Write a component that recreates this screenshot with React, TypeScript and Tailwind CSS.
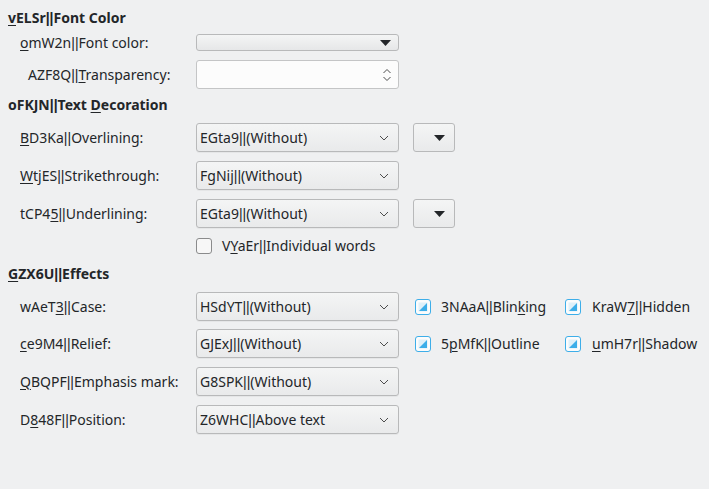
import React from "react";

const U = ({ c }: { c: string }) => <span className="underline underline-offset-[2px] decoration-[1px]">{c}</span>;
const P = () => <span style={{ fontFamily: '"Liberation Sans", Arial, sans-serif' }}>||</span>;

const Chevron = () => (
  <svg width="10" height="6" viewBox="0 0 10 6" className="shrink-0">
    <path d="M1 1 L5 5 L9 1" fill="none" stroke="#4d4d4d" strokeWidth="1" />
  </svg>
);

const Tri = () => (
  <svg width="11" height="6" viewBox="0 0 11 6" className="shrink-0">
    <path d="M0 0 L11 0 L5.5 6 Z" fill="#232629" />
  </svg>
);

const Combo = ({ children }: { children: React.ReactNode }) => (
  <div className="w-[203px] h-[29px] shrink-0 rounded-[3px] border border-[#b8b9ba] bg-gradient-to-b from-[#f4f5f5] to-[#e9eaeb] flex items-center pl-[3px] pr-[9px] justify-between shadow-[0_1px_0_rgba(0,0,0,0.04)]">
    <span className="whitespace-nowrap">{children}</span>
    <Chevron />
  </div>
);

const SmallBtn = () => (
  <div className="ml-[14px] w-[42px] h-[29px] rounded-[3px] border border-[#b8b9ba] bg-gradient-to-b from-[#f4f5f5] to-[#e9eaeb] flex items-center justify-end pr-[9px]">
    <Tri />
  </div>
);

const TriCheck = () => (
  <div className="w-[16px] h-[16px] shrink-0 rounded-[3px] border-[1.5px] border-[#3daee9] bg-[#fcfcfc] flex items-center justify-center">
    <svg width="10" height="10" viewBox="0 0 10 10">
      <rect x="0.5" y="0.5" width="9" height="9" fill="#3daee9" opacity="0.15" />
      <path d="M9 1 L9 9 L1 9 Z" fill="#3daee9" />
    </svg>
  </div>
);

const Row = ({ label, children, mt }: { label: React.ReactNode; children: React.ReactNode; mt: string }) => (
  <div className={`flex items-center h-[29px] ${mt}`}>
    <div className="w-[188px] pl-[12px] whitespace-nowrap shrink-0">{label}</div>
    {children}
  </div>
);

export default function App() {
  return (
    <div
      className="w-[709px] h-[489px] bg-[#eff0f1] text-[#232629] text-[14px] leading-[18px] pl-[8px] pt-[9px] overflow-hidden"
      style={{ fontFamily: '"Noto Sans", "DejaVu Sans", sans-serif' }}
    >
      <div className="font-bold h-[18px]"><U c="v" />ELSr<P />Font Color</div>

      <div className="flex items-center h-[17px] mt-[7px]">
        <div className="w-[188px] pl-[12px] whitespace-nowrap shrink-0"><U c="o" />mW2n<P />Font color:</div>
        <div className="w-[203px] h-[17px] rounded-[3px] border border-[#b8b9ba] bg-gradient-to-b from-[#f4f5f5] to-[#e6e7e8] flex items-center justify-end pr-[7px]">
          <Tri />
        </div>
      </div>

      <div className="flex items-center h-[29px] mt-[9px]">
        <div className="w-[188px] pl-[20px] whitespace-nowrap shrink-0">AZF8Q<P /><U c="T" />ransparency:</div>
        <div className="w-[203px] h-[29px] rounded-[3px] border border-[#c4c5c6] bg-[#fcfcfc] flex items-center justify-end pr-[6px]">
          <svg width="10" height="16" viewBox="0 0 10 16">
            <path d="M1.5 6 L5 2.5 L8.5 6" fill="none" stroke="#4d4d4d" strokeWidth="1" />
            <path d="M1.5 10 L5 13.5 L8.5 10" fill="none" stroke="#4d4d4d" strokeWidth="1" />
          </svg>
        </div>
      </div>

      <div className="font-bold h-[18px] mt-[7px]">oFKJN<P />Text <U c="D" />ecoration</div>

      <Row mt="mt-[9px]" label={<><U c="B" />D3Ka<P />Overlining:</>}>
        <Combo>EGta9<P />(Without)</Combo>
        <SmallBtn />
      </Row>
      <Row mt="mt-[9px]" label={<><U c="W" />tjES<P />Strikethrough:</>}>
        <Combo>FgNij<P />(Without)</Combo>
      </Row>
      <Row mt="mt-[9px]" label={<>tCP4<U c="5" /><P />Underlining:</>}>
        <Combo>EGta9<P />(Without)</Combo>
        <SmallBtn />
      </Row>

      <div className="flex items-center h-[16px] mt-[10px] pl-[188px]">
        <div className="w-[16px] h-[16px] rounded-[3px] border border-[#8a8b8c] bg-[#f7f7f7]" />
        <span className="ml-[10px] whitespace-nowrap">V<U c="Y" />aEr<P />Individual words</span>
      </div>

      <div className="font-bold h-[18px] mt-[11px]"><U c="G" />ZX6U<P />Effects</div>

      <Row mt="mt-[9px]" label={<>wAeT<U c="3" /><P />Case:</>}>
        <Combo>HSdYT<P />(Without)</Combo>
        <div className="flex items-center ml-[16px] w-[150px]">
          <TriCheck />
          <span className="ml-[10px] whitespace-nowrap">3NAaA<P />Blin<U c="k" />ing</span>
        </div>
        <div className="flex items-center">
          <TriCheck />
          <span className="ml-[11px] whitespace-nowrap">KraW<U c="7" /><P />Hidden</span>
        </div>
      </Row>
      <Row mt="mt-[8px]" label={<><U c="c" />e9M4<P />Relief:</>}>
        <Combo>GJExJ<P />(Without)</Combo>
        <div className="flex items-center ml-[16px] w-[150px]">
          <TriCheck />
          <span className="ml-[10px] whitespace-nowrap">5<U c="p" />MfK<P />Outline</span>
        </div>
        <div className="flex items-center">
          <TriCheck />
          <span className="ml-[11px] whitespace-nowrap"><U c="u" />mH7r<P />Shadow</span>
        </div>
      </Row>
      <Row mt="mt-[9px]" label={<><U c="Q" />BQPF<P />Emphasis mark:</>}>
        <Combo>G8SPK<P />(Without)</Combo>
      </Row>
      <Row mt="mt-[9px]" label={<>D<U c="8" />48F<P />Position:</>}>
        <Combo>Z6WHC<P />Above text</Combo>
      </Row>
    </div>
  );
}
